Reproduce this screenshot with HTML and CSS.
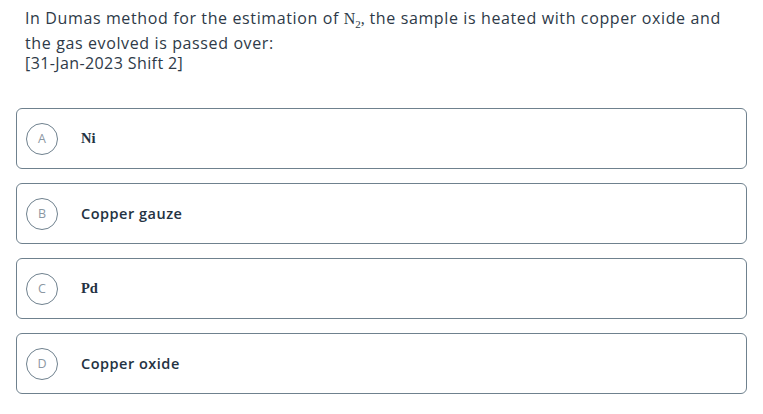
FILE: index.html
```html
<!DOCTYPE html>
<html lang="en">
<head>
<meta charset="utf-8">
<title>Question</title>
<link rel="stylesheet" href="styles.css">
</head>
<body>
<div class="question">
  <div class="q-main">In Dumas method for the estimation of <span class="math">N<sub>2</sub>,</span> the sample is heated with copper oxide and<br>the gas evolved is passed over:</div>
  <div class="q-date">[31-Jan-2023 Shift 2]</div>
</div>
<div class="options">
  <div class="option"><span class="badge">A</span><span class="opt-text serif">Ni</span></div>
  <div class="option"><span class="badge">B</span><span class="opt-text">Copper gauze</span></div>
  <div class="option"><span class="badge">C</span><span class="opt-text serif">Pd</span></div>
  <div class="option"><span class="badge">D</span><span class="opt-text">Copper oxide</span></div>
</div>
</body>
</html>
```
FILE: styles.css
```css
html, body {
  margin: 0;
  padding: 0;
  background: #ffffff;
}
body {
  font-family: "Open Sans", "Liberation Sans", sans-serif;
  color: #2e3a48;
}
.question {
  padding: 6px 10px 0 25px;
  font-size: 16px;
  letter-spacing: 0.62px;
}
.q-main {
  line-height: 24px;
}
.q-date {
  line-height: 16px;
  letter-spacing: 0.4px;
}
.math {
  font-family: "Liberation Serif", "DejaVu Serif", serif;
  font-size: 16px;
  letter-spacing: 0;
}
.math sub {
  font-size: 11px;
  vertical-align: -4px;
  line-height: 1;
}
.options {
  display: flex;
  flex-direction: column;
  gap: 14px;
  margin: 37px 16px 0 16px;
}
.option {
  box-sizing: border-box;
  height: 61px;
  border: 1px solid #6f818e;
  border-radius: 6px;
  display: flex;
  align-items: center;
  padding-left: 9px;
}
.badge {
  box-sizing: border-box;
  width: 32px;
  height: 32px;
  border: 1px solid #6f818e;
  border-radius: 50%;
  display: flex;
  align-items: center;
  justify-content: center;
  font-size: 12.5px;
  color: #8b97a2;
  flex: none;
}
.opt-text {
  margin-left: 23px;
  font-size: 14.5px;
  font-weight: 600;
  letter-spacing: 0.5px;
  color: #243242;
}
.opt-text.serif {
  font-family: "Liberation Serif", "DejaVu Serif", serif;
  font-weight: 700;
  font-size: 14.5px;
  letter-spacing: 0;
}
```
